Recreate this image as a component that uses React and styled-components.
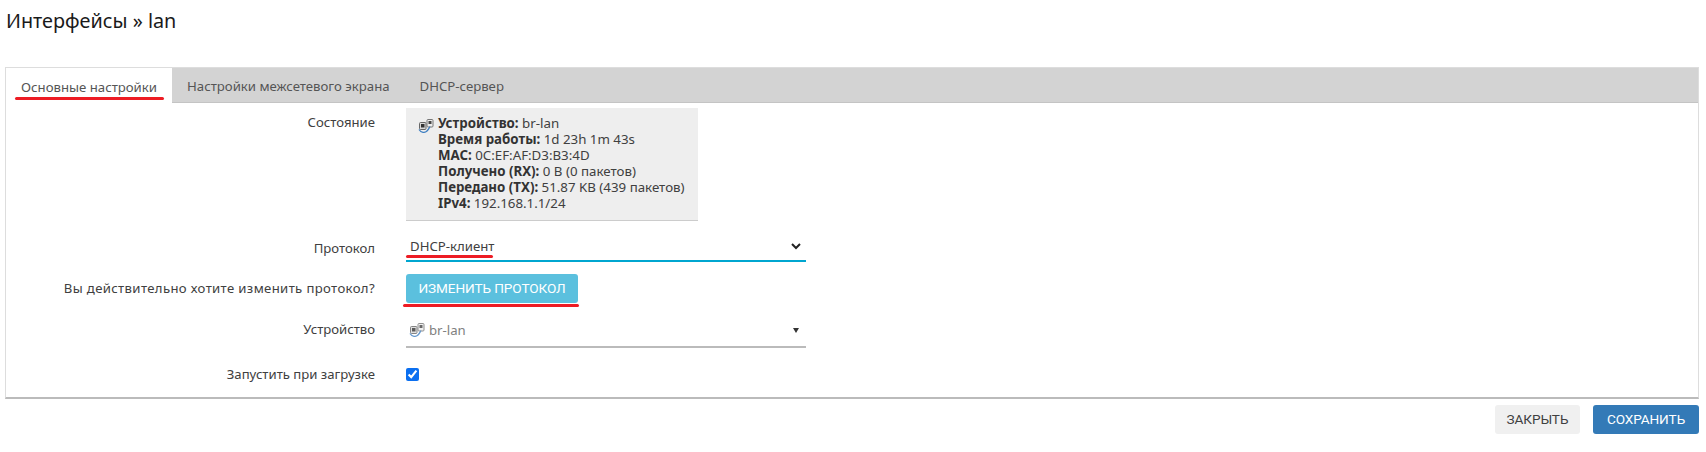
import React from "react";
import styled, { createGlobalStyle } from "styled-components";

const Global = createGlobalStyle`
  html, body { margin: 0; padding: 0; background: #fff; }
  body { font-family: "Noto Sans", "Open Sans", sans-serif; font-size: 13px; color: #404040; }
`;
const Page = styled.div`
  width: 1706px; height: 452px; box-sizing: border-box; padding: 8px 7px 0 5px; overflow: hidden;
`;
const Title = styled.h2`
  margin: 0 0 0 1px; height: 59px; font-size: 19.8px; line-height: 26px; font-weight: 400; color: #1a1a1a;
`;
const Panel = styled.div`
  box-sizing: border-box; height: 332px; border: 1px solid #ddd; border-bottom: 2px solid #bbb; background: #fff;
`;
const Tabs = styled.div`
  display: flex; height: 34px; background: #d3d3d3; border-bottom: 1px solid #c4c4c4; box-sizing: content-box;
`;
const Tab = styled.div`
  position: relative; box-sizing: border-box; display: flex; align-items: center; padding: 2px 15px 0;
  color: #555; font-size: 13.2px;
  background: ${(p) => (p.$active ? "#fff" : "transparent")};
  margin-bottom: ${(p) => (p.$active ? "-1px" : "0")};
  height: ${(p) => (p.$active ? "35px" : "34px")};
`;
const RedMark = styled.span`
  position: absolute; height: 3px; background: #ed1c24; border-radius: 2px;
  left: ${(p) => p.$l}px; width: ${(p) => p.$w}px; bottom: ${(p) => p.$b}px;
`;
const Body = styled.div`
  display: flex; flex-direction: column; padding-top: 5px;
`;
const Row = styled.div`
  display: grid; grid-template-columns: 369px 400px; column-gap: 31px; align-items: start;
  margin-bottom: ${(p) => p.$mb || 0}px;
`;
const Label = styled.div`
  text-align: right; color: #404040; font-size: 13.15px; line-height: ${(p) => p.$lh || 18}px;
  padding-top: ${(p) => p.$pt || 0}px; letter-spacing: ${(p) => p.$ls || 0}px; white-space: nowrap;
`;
const Status = styled.div`
  box-sizing: border-box; width: 292px; height: 113px; background: #eee; border-bottom: 1px solid #ccc;
  padding: 8px 12px; display: flex; gap: 4px; font-size: 13.3px; line-height: 15.9px; color: #404040;
  b { font-weight: 700; color: #333; }
  > svg { margin-top: 3px; }
`;
const Lines = styled.div` display: flex; flex-direction: column; white-space: nowrap; `;
const SelectBox = styled.div`
  position: relative; box-sizing: border-box; width: 400px; height: ${(p) => p.$h}px; display: flex; align-items: center;
  justify-content: space-between; padding: 2px 4px 0 ${(p) => p.$pl}px;
  border-bottom: 2px solid ${(p) => p.$color};
  color: ${(p) => p.$text}; font-size: 13.2px;
`;
const Value = styled.span` display: flex; align-items: center; gap: 4px; `;
const Btn = styled.button`
  box-sizing: border-box; height: 29px; border: 0; border-radius: 3px; padding: 0;
  font: 400 13.6px/1 "Roboto", sans-serif; letter-spacing: -0.1px; text-transform: uppercase;
  background: ${(p) => p.$bg}; color: ${(p) => p.$fg}; width: ${(p) => p.$w}px;
`;
const ChangeBtn = styled(Btn)` position: relative; overflow: visible; `;
const Check = styled.input`
  margin: 0; width: 13px; height: 13px; accent-color: #0b6ff0;
`;
const Footer = styled.div`
  display: flex; justify-content: flex-end; gap: 13px; padding-top: 6px;
`;

const Net = ({ o = 1 }) => (
  <svg width="16" height="14" viewBox="0 0 16 14" style={{ opacity: o, flex: "none" }}>
    <rect x="1.5" y="3.5" width="6.5" height="7" rx="1" fill="#d8d8d8" stroke="#666" />
    <rect x="3" y="5" width="3.5" height="3.5" fill="#333" />
    <rect x="9" y="0.5" width="6" height="7.5" rx="1" fill="#eee" stroke="#777" />
    <rect x="10.5" y="2" width="3" height="3" fill="#444" />
    <path d="M1 10.5c2 3.5 6 3.5 8 1.5s2-3 3-4.5" fill="none" stroke="#3f7fc1" strokeWidth="1.3" />
  </svg>
);

export default function App() {
  return (
    <Page>
      <Global />
      <Title>Интерфейсы » lan</Title>
      <Panel>
        <Tabs>
          <Tab $active>
            Основные настройки
            <RedMark $l={9} $w={149} $b={3} />
          </Tab>
          <Tab>Настройки межсетевого экрана</Tab>
          <Tab>DHCP-сервер</Tab>
        </Tabs>
        <Body>
          <Row $mb={9}>
            <Label $pt={5}>Состояние</Label>
            <Status>
              <Net />
              <Lines>
                <span><b>Устройство:</b> br-lan</span>
                <span><b>Время работы:</b> 1d 23h 1m 43s</span>
                <span><b>MAC:</b> 0C:EF:AF:D3:B3:4D</span>
                <span><b>Получено (RX):</b> 0 B (0 пакетов)</span>
                <span><b>Передано (TX):</b> 51.87 KB (439 пакетов)</span>
                <span><b>IPv4:</b> 192.168.1.1/24</span>
              </Lines>
            </Status>
          </Row>
          <Row $mb={12}>
            <Label $pt={9}>Протокол</Label>
            <SelectBox $h={32} $pl={4} $color="#00a6d0" $text="#404040">
              <span>DHCP-клиент</span>
              <svg width="12" height="12" viewBox="0 0 12 12"><path d="M2 4l4 4 4-4" fill="none" stroke="#222" strokeWidth="2" /></svg>
              <RedMark $l={0} $w={87} $b={2} />
            </SelectBox>
          </Row>
          <Row $mb={9}>
            <Label $pt={5} $ls={0.36}>Вы действительно хотите изменить протокол?</Label>
            <ChangeBtn $bg="#5bc0de" $fg="#fff" $w={172}>
              Изменить протокол
              <RedMark $l={-3} $w={176} $b={-4} />
            </ChangeBtn>
          </Row>
          <Row $mb={20}>
            <Label $pt={8}>Устройство</Label>
            <SelectBox $h={36} $pl={3} $color="#bbb" $text="#808080">
              <Value><Net o={0.8} />br-lan</Value>
              <svg width="12" height="12" viewBox="0 0 12 12"><path d="M3 4h6L6 9z" fill="#333" /></svg>
            </SelectBox>
          </Row>
          <Row>
            <Label $lh={13}>Запустить при загрузке</Label>
            <Check type="checkbox" defaultChecked readOnly />
          </Row>
        </Body>
      </Panel>
      <Footer>
        <Btn $bg="#f0f0f0" $fg="#404040" $w={85}>Закрыть</Btn>
        <Btn $bg="#337ab7" $fg="#fff" $w={106}>Сохранить</Btn>
      </Footer>
    </Page>
  );
}
